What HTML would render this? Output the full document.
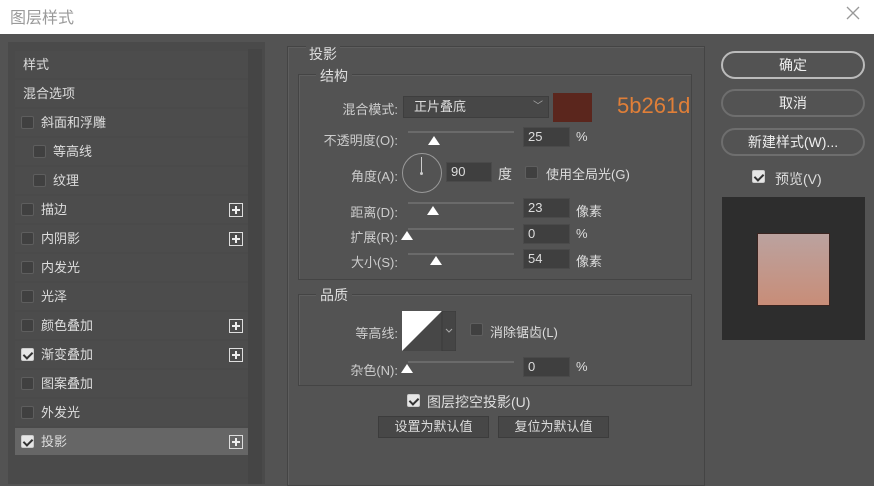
<!DOCTYPE html>
<html><head><meta charset="utf-8"><style>
*{margin:0;padding:0;box-sizing:border-box}
body{width:874px;height:484px;overflow:hidden;background:#535353;position:relative;font-family:"Liberation Sans","Noto Sans CJK SC",sans-serif;color:#ddd;font-size:13px}
.a{position:absolute;white-space:nowrap}
.top{left:0;top:0;width:874px;height:34px;background:#fff}
.row{position:absolute;left:15px;width:233px;height:27px;background:#4c4c4c;line-height:27px}
.cb{position:absolute;width:13px;height:13px;border:1px solid #5e5e5e;background:#404040;border-radius:2px}
.cb.on{background:#e6e6e6;border-color:#ccc}
.cb.on::after{content:"";position:absolute;left:3px;top:1px;width:4px;height:7px;border:solid #333;border-width:0 2px 2px 0;transform:rotate(45deg)}
.plus{position:absolute;left:214px;top:7px;width:14px;height:14px;border:1px solid #ddd}
.plus::before{content:"";position:absolute;left:2px;top:5px;width:8px;height:2px;background:#eee}
.plus::after{content:"";position:absolute;left:5px;top:2px;width:2px;height:8px;background:#eee}
.grp{position:absolute;border:1px solid #444;box-shadow:inset 1px 1px 0 #5e5e5e}
.lbl{position:absolute;text-align:right;width:110px;left:288px;color:#ccc}
.inp{position:absolute;background:#3f3f3f;border:1px solid #4a4a4a;height:20px;line-height:18px;padding-left:4px;color:#ddd}
.trk{position:absolute;left:408px;width:106px;height:2px;background:#6a6a6a}
.th{position:absolute;width:0;height:0;border-left:6px solid transparent;border-right:6px solid transparent;border-bottom:9px solid #fff}
.btn{position:absolute;left:721px;width:144px;height:28px;border:2px solid #8a8a8a;border-radius:14px;text-align:center;line-height:24px;color:#eee;font-size:14px}
.b2{position:absolute;top:416px;height:22px;background:#474747;border:1px solid #3c3c3c;text-align:center;line-height:20px;color:#ddd}
</style></head><body>
<div class="a top"></div>
<div class="a" style="left:10px;top:4px;font-size:16px;color:#9a9a9a">图层样式</div>
<svg class="a" style="left:846px;top:6px" width="14" height="14"><path d="M1 1L13 13M13 1L1 13" stroke="#999" stroke-width="1.3"/></svg>

<div class="a" style="left:8px;top:42px;width:257px;height:442px;background:#4a4a4a"></div>
<div class="a" style="left:248px;top:49px;width:14px;height:435px;background:#454545"></div>

<div class="row" style="top:51px;padding-left:8px">样式</div>
<div class="row" style="top:80px;padding-left:8px">混合选项</div>
<div class="row" style="top:109px"><div class="cb" style="left:6px;top:7px"></div><span style="position:absolute;left:26px">斜面和浮雕</span></div>
<div class="row" style="top:138px"><div class="cb" style="left:18px;top:7px"></div><span style="position:absolute;left:38px">等高线</span></div>
<div class="row" style="top:167px"><div class="cb" style="left:18px;top:7px"></div><span style="position:absolute;left:38px">纹理</span></div>
<div class="row" style="top:196px"><div class="cb" style="left:6px;top:7px"></div><span style="position:absolute;left:26px">描边</span><div class="plus"></div></div>
<div class="row" style="top:225px"><div class="cb" style="left:6px;top:7px"></div><span style="position:absolute;left:26px">内阴影</span><div class="plus"></div></div>
<div class="row" style="top:254px"><div class="cb" style="left:6px;top:7px"></div><span style="position:absolute;left:26px">内发光</span></div>
<div class="row" style="top:283px"><div class="cb" style="left:6px;top:7px"></div><span style="position:absolute;left:26px">光泽</span></div>
<div class="row" style="top:312px"><div class="cb" style="left:6px;top:7px"></div><span style="position:absolute;left:26px">颜色叠加</span><div class="plus"></div></div>
<div class="row" style="top:341px"><div class="cb on" style="left:6px;top:7px"></div><span style="position:absolute;left:26px">渐变叠加</span><div class="plus"></div></div>
<div class="row" style="top:370px"><div class="cb" style="left:6px;top:7px"></div><span style="position:absolute;left:26px">图案叠加</span></div>
<div class="row" style="top:399px"><div class="cb" style="left:6px;top:7px"></div><span style="position:absolute;left:26px">外发光</span></div>
<div class="row" style="top:428px;background:#666"><div class="cb on" style="left:6px;top:7px"></div><span style="position:absolute;left:26px">投影</span><div class="plus"></div></div>

<div class="grp" style="left:287px;top:46px;width:418px;height:440px"></div>
<div class="a" style="left:306px;top:44px;background:#535353;padding:0 3px;font-size:14px">投影</div>
<div class="grp" style="left:298px;top:74px;width:394px;height:206px"></div>
<div class="a" style="left:316px;top:66px;background:#535353;padding:0 4px;font-size:14px">结构</div>

<div class="lbl" style="top:99px">混合模式:</div>
<div class="a" style="left:403px;top:96px;width:146px;height:22px;background:#474747;border:1px solid #3e3e3e;line-height:20px;padding-left:10px">正片叠底<span style="position:absolute;right:5px;color:#aaa;font-size:10px">﹀</span></div>
<div class="a" style="left:553px;top:93px;width:39px;height:29px;background:#5b261d"></div>
<div class="a" style="left:617px;top:93px;font-size:22px;color:#e07f38">5b261d</div>

<div class="lbl" style="top:130px">不透明度(O):</div>
<div class="trk" style="top:131px"></div><div class="th" style="left:428px;top:136px"></div>
<div class="inp" style="left:523px;top:127px;width:47px">25</div><div class="a" style="left:576px;top:129px">%</div>

<div class="lbl" style="top:166px">角度(A):</div>
<div class="a" style="left:402px;top:153px;width:40px;height:40px;border:1px solid #999;border-radius:50%"></div>
<div class="a" style="left:421px;top:157px;width:1px;height:16px;background:#ccc"></div>
<div class="a" style="left:420px;top:172px;width:3px;height:3px;background:#ccc;border-radius:50%"></div>
<div class="inp" style="left:446px;top:162px;width:46px">90</div>
<div class="a" style="left:498px;top:164px;font-size:14px">度</div>
<div class="cb" style="left:525px;top:166px"></div>
<div class="a" style="left:546px;top:164px">使用全局光(G)</div>

<div class="lbl" style="top:202px">距离(D):</div>
<div class="trk" style="top:202px"></div><div class="th" style="left:427px;top:206px"></div>
<div class="inp" style="left:523px;top:198px;width:47px">23</div><div class="a" style="left:576px;top:201px">像素</div>

<div class="lbl" style="top:227px">扩展(R):</div>
<div class="trk" style="top:228px"></div><div class="th" style="left:401px;top:231px"></div>
<div class="inp" style="left:523px;top:224px;width:47px">0</div><div class="a" style="left:576px;top:226px">%</div>

<div class="lbl" style="top:252px">大小(S):</div>
<div class="trk" style="top:253px"></div><div class="th" style="left:430px;top:256px"></div>
<div class="inp" style="left:523px;top:249px;width:47px">54</div><div class="a" style="left:576px;top:251px">像素</div>

<div class="grp" style="left:298px;top:294px;width:394px;height:92px"></div>
<div class="a" style="left:316px;top:285px;background:#535353;padding:0 4px;font-size:14px">品质</div>
<div class="lbl" style="top:323px">等高线:</div>
<svg class="a" style="left:402px;top:311px" width="54" height="40"><rect x="0" y="0" width="40" height="40" fill="#474747"/><polygon points="0,40 0,0 40,0" fill="#fff"/><rect x="40" y="0" width="14" height="40" fill="#454545" stroke="#3a3a3a"/><polyline points="44,18 47,21 50,18" fill="none" stroke="#aaa"/></svg>
<div class="cb" style="left:470px;top:323px"></div>
<div class="a" style="left:490px;top:322px">消除锯齿(L)</div>
<div class="lbl" style="top:360px">杂色(N):</div>
<div class="trk" style="top:361px"></div><div class="th" style="left:401px;top:364px"></div>
<div class="inp" style="left:523px;top:357px;width:47px">0</div><div class="a" style="left:576px;top:359px">%</div>

<div class="cb on" style="left:407px;top:394px"></div>
<div class="a" style="left:427px;top:392px;font-size:14px">图层挖空投影(U)</div>
<div class="b2" style="left:378px;width:111px">设置为默认值</div>
<div class="b2" style="left:498px;width:111px">复位为默认值</div>

<div class="btn" style="top:51px;border-color:#bbb">确定</div>
<div class="btn" style="top:89px;border-color:#6e6e6e">取消</div>
<div class="btn" style="top:128px;border-color:#6e6e6e">新建样式(W)...</div>
<div class="cb on" style="left:752px;top:170px"></div>
<div class="a" style="left:775px;top:169px;font-size:14px">预览(V)</div>
<div class="a" style="left:722px;top:197px;width:143px;height:143px;background:#2d2d2d"></div>
<div class="a" style="left:757px;top:233px;width:73px;height:73px;background:linear-gradient(#bba29f,#c88d78);border:1px solid #3a2420"></div>
</body></html>
